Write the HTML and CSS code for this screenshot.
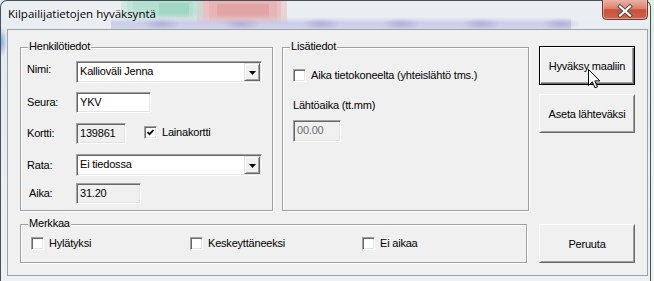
FILE: index.html
```html
<!DOCTYPE html>
<html lang="fi">
<head>
<meta charset="utf-8">
<title>Kilpailijatietojen hyväksyntä</title>
<link rel="stylesheet" href="styles.css">
</head>
<body>
<div class="window">
  <div class="titlebar">
    <span class="title">Kilpailijatietojen hyväksyntä</span>
    <div class="close">
      <svg width="46" height="20" viewBox="0 0 46 20">
        <defs>
          <linearGradient id="cg" x1="0" y1="0" x2="0" y2="1">
            <stop offset="0" stop-color="#eab2a6"/>
            <stop offset="0.45" stop-color="#d9806c"/>
            <stop offset="0.5" stop-color="#c9503a"/>
            <stop offset="1" stop-color="#d3654a"/>
          </linearGradient>
        </defs>
        <path d="M0.5,0 L0.5,15.5 Q0.5,19.5 4.5,19.5 L41.5,19.5 Q45.5,19.5 45.5,15.5 L45.5,0" fill="url(#cg)" stroke="#7a3326" stroke-width="1"/>
        <path d="M1.5,0 L1.5,15.5 Q1.5,18.5 4.5,18.5 L41.5,18.5 Q44.5,18.5 44.5,15.5 L44.5,0" fill="none" stroke="#f3c7bd" stroke-opacity="0.6" stroke-width="1"/>
        <path d="M18,6.5 L28,15.5 M28,6.5 L18,15.5" stroke="#4a4a4a" stroke-width="4" stroke-linecap="square"/>
        <path d="M18,6.5 L28,15.5 M28,6.5 L18,15.5" stroke="#ffffff" stroke-width="2.2" stroke-linecap="square"/>
      </svg>
    </div>
  </div>

  <div class="client">
    <div class="top-row">
      <div class="group g-person">
        <span class="legend">Henkilötiedot</span>
        <div class="form">
          <span class="lbl lbl-h22 lbl-up">Nimi:</span>
          <div class="field combo">
            <span class="combo-text">Kallioväli Jenna</span>
            <span class="drop"><svg width="7" height="4" viewBox="0 0 7 4"><polygon points="0,0 7,0 3.5,4" fill="#000"/></svg></span>
          </div>

          <span class="lbl">Seura:</span>
          <div class="field tb w-seura">YKV</div>

          <span class="lbl">Kortti:</span>
          <div class="kortti-row">
            <div class="field tb ro w-kortti">139861</div>
            <span class="check gap-card">
              <span class="cb"><svg width="7" height="7" viewBox="0 0 7 7"><polyline points="0.5,3 2.5,5.2 6.5,1" fill="none" stroke="#000" stroke-width="1.8"/></svg></span>
              <span class="cb-text">Lainakortti</span>
            </span>
          </div>

          <span class="lbl lbl-h22">Rata:</span>
          <div class="field combo">
            <span class="combo-text">Ei tiedossa</span>
            <span class="drop"><svg width="7" height="4" viewBox="0 0 7 4"><polygon points="0,0 7,0 3.5,4" fill="#000"/></svg></span>
          </div>

          <span class="lbl lbl-aika">Aika:</span>
          <div class="field tb ro w-aika">31.20</div>
        </div>
      </div>

      <div class="group g-extra">
        <span class="legend">Lisätiedot</span>
        <span class="check">
          <span class="cb"></span>
          <span class="cb-text">Aika tietokoneelta (yhteislähtö tms.)</span>
        </span>
        <div class="sublabel">Lähtöaika (tt.mm)</div>
        <div class="field tb ro disabled w-start">00.00</div>
      </div>

      <div class="btn-col">
        <div class="btn default">Hyväksy maaliin</div>
        <div class="btn">Aseta lähteväksi</div>
      </div>
    </div>

    <div class="bottom-row">
      <div class="group g-mark">
        <span class="legend">Merkkaa</span>
        <div class="mark-row">
          <span class="check"><span class="cb"></span><span class="cb-text">Hylätyksi</span></span>
          <span class="check"><span class="cb"></span><span class="cb-text">Keskeyttäneeksi</span></span>
          <span class="check"><span class="cb"></span><span class="cb-text">Ei aikaa</span></span>
        </div>
      </div>
      <div class="btn btn-cancel">Peruuta</div>
    </div>
  </div>

  <svg class="cursor" width="13" height="20" viewBox="0 0 13 20">
    <polygon points="0.5,0.5 0.5,16.5 4.3,12.8 7,18.8 9.4,17.8 6.8,11.9 11.8,11.9" fill="#fff" stroke="#000" stroke-width="1" stroke-linejoin="miter"/>
  </svg>
</div>
</body>
</html>
```

FILE: styles.css
```css
html, body {
  margin: 0;
  padding: 0;
}

body {
  width: 654px;
  height: 281px;
  overflow: hidden;
  background: linear-gradient(to bottom, #dff0e6, #eef4f0);
  font-family: "Liberation Sans", Arial, sans-serif;
  font-size: 11px;
  letter-spacing: -0.2px;
  color: #000;
}

.window {
  position: relative;
  box-sizing: border-box;
  width: 651px;
  height: 281px;
  border: 1px solid #46505a;
  border-bottom: none;
  border-radius: 7px 7px 0 0;
  display: flex;
  flex-direction: column;
  background:
    /* blurred green window behind the glass */
    linear-gradient(to bottom, rgba(120, 195, 165, 0.3) 0, rgba(120, 195, 165, 0.3) 65%, rgba(120, 195, 165, 0) 100%) 158px 2px / 30px 15px no-repeat,
    linear-gradient(to bottom, rgba(150, 215, 190, 0.3) 0, rgba(150, 215, 190, 0.3) 65%, rgba(150, 215, 190, 0) 100%) 132px 0 / 60px 19px no-repeat,
    linear-gradient(to bottom, rgba(150, 215, 190, 0.3) 0, rgba(150, 215, 190, 0.3) 65%, rgba(150, 215, 190, 0) 100%) 126px 0 / 70px 20px no-repeat,
    linear-gradient(to bottom, rgba(150, 215, 190, 0.3) 0, rgba(150, 215, 190, 0.3) 65%, rgba(150, 215, 190, 0) 100%) 120px 0 / 82px 22px no-repeat,
    /* blurred red window */
    linear-gradient(to bottom, rgba(205, 120, 120, 0.28) 0, rgba(205, 120, 120, 0.28) 65%, rgba(205, 120, 120, 0) 100%) 216px 3px / 52px 15px no-repeat,
    linear-gradient(to bottom, rgba(230, 155, 155, 0.32) 0, rgba(230, 155, 155, 0.32) 65%, rgba(230, 155, 155, 0) 100%) 208px 0 / 68px 22px no-repeat,
    linear-gradient(to bottom, rgba(230, 155, 155, 0.32) 0, rgba(230, 155, 155, 0.32) 65%, rgba(230, 155, 155, 0) 100%) 202px 0 / 78px 23px no-repeat,
    linear-gradient(to bottom, rgba(230, 155, 155, 0.32) 0, rgba(230, 155, 155, 0.32) 65%, rgba(230, 155, 155, 0) 100%) 196px 0 / 90px 24px no-repeat,
    /* blurred column headers */
    radial-gradient(closest-side, rgba(140, 140, 195, 0.45), rgba(140, 140, 195, 0)) 140px 17px / 40px 12px no-repeat,
    radial-gradient(closest-side, rgba(140, 140, 195, 0.45), rgba(140, 140, 195, 0)) 220px 17px / 40px 12px no-repeat,
    radial-gradient(closest-side, rgba(140, 140, 195, 0.45), rgba(140, 140, 195, 0)) 300px 17px / 40px 12px no-repeat,
    radial-gradient(closest-side, rgba(140, 140, 195, 0.45), rgba(140, 140, 195, 0)) 380px 17px / 40px 12px no-repeat,
    radial-gradient(closest-side, rgba(140, 140, 195, 0.45), rgba(140, 140, 195, 0)) 460px 17px / 40px 12px no-repeat,
    radial-gradient(closest-side, rgba(140, 140, 195, 0.45), rgba(140, 140, 195, 0)) 540px 17px / 40px 12px no-repeat,
    linear-gradient(to bottom, rgba(200, 202, 232, 0) 0, rgba(200, 202, 232, 0.9) 45%, rgba(200, 202, 232, 0.7) 100%) 110px 16px / 460px 13px no-repeat,
    radial-gradient(closest-side, rgba(80, 140, 215, 0.7), rgba(80, 140, 215, 0)) -6px 26px / 12px 30px no-repeat,
    linear-gradient(to bottom, #eceff2 0, #e9edf1 28px, #e4e9ee 29px, #eef1f3 100%);
}

/* ---------- title bar ---------- */
.titlebar {
  height: 28px;
  display: flex;
  justify-content: space-between;
  align-items: flex-start;
  padding-left: 7px;
}

.title {
  font-family: "Open Sans", "Noto Sans", sans-serif;
  font-size: 11.5px;
  letter-spacing: 0;
  line-height: 16px;
  padding-top: 5px;
  color: #000;
  text-shadow: 0 0 6px rgba(255, 255, 255, 0.9);
}

.close {
  width: 46px;
  height: 20px;
  margin-top: -1px;
  margin-right: 2px;
  line-height: 0;
}

/* ---------- client area ---------- */
.client {
  box-sizing: border-box;
  margin-left: 6px;
  width: 641px;
  height: 247px;
  border: 1px solid #9aa3ab;
  background: #f0f0f0;
  padding: 17px 0 0 12px;
}

.top-row {
  display: flex;
  align-items: flex-start;
}

.bottom-row {
  display: flex;
  align-items: flex-start;
  margin-top: 13px;
}

/* ---------- group boxes ---------- */
.group {
  position: relative;
  box-sizing: border-box;
  border: 1px solid #a0a0a0;
  box-shadow: inset 1px 1px 0 #fff, 1px 1px 0 #fff;
}

.legend {
  position: absolute;
  top: -8px;
  left: 7px;
  padding: 0 1px;
  line-height: 13px;
  background: #f0f0f0;
}

.g-person {
  width: 253px;
  height: 164px;
  padding: 13px 0 0 6px;
}

.g-extra {
  width: 247px;
  height: 164px;
  margin-left: 9px;
  padding: 21px 0 0 10px;
}

.g-mark {
  width: 507px;
  height: 39px;
  padding: 12px 0 0 10px;
}

/* ---------- form grid ---------- */
.form {
  display: grid;
  grid-template-columns: 49px auto;
  grid-template-rows: 31px 31px 31px 29px 21px;
  align-items: start;
  justify-items: start;
}

.lbl {
  line-height: 21px;
  height: 21px;
}

.lbl-h22 {
  line-height: 22px;
  height: 22px;
}

.lbl-up {
  line-height: 17px;
}

.lbl-aika {
  padding-left: 2px;
}

/* ---------- sunken fields ---------- */
.field {
  box-sizing: border-box;
  border: 1px solid;
  border-color: #a0a0a0 #fff #fff #a0a0a0;
  box-shadow: inset 1px 1px 0 #696969, inset -1px -1px 0 #e3e3e3;
  background: #fff;
}

.tb {
  height: 21px;
  padding: 1px 2px 0 3px;
  line-height: 16px;
}

.ro {
  background: #f0f0f0;
}

.disabled {
  color: #6d6d6d;
}

.w-seura { width: 75px; }
.w-kortti { width: 50px; }
.w-aika { width: 65px; }
.w-start { width: 48px; height: 22px; margin-top: 8px; }

.combo {
  width: 186px;
  height: 22px;
  display: flex;
  align-items: stretch;
  padding: 1px;
}

.combo-text {
  flex: 1;
  padding-left: 2px;
  line-height: 17px;
}

.drop {
  box-sizing: border-box;
  width: 16px;
  display: flex;
  align-items: center;
  justify-content: center;
  background: #f0f0f0;
  border: 1px solid;
  border-color: #e3e3e3 #696969 #696969 #e3e3e3;
  box-shadow: inset 1px 1px 0 #fff, inset -1px -1px 0 #a0a0a0;
  padding-top: 1px;
}

.drop svg {
  display: block;
}

/* ---------- check boxes ---------- */
.kortti-row {
  display: flex;
  align-items: center;
  height: 21px;
}

.check {
  display: flex;
  align-items: center;
}

.gap-card {
  margin-left: 18px;
  margin-top: -2px;
}

.cb {
  box-sizing: border-box;
  flex: none;
  width: 13px;
  height: 13px;
  border: 1px solid;
  border-color: #a0a0a0 #fff #fff #a0a0a0;
  box-shadow: inset 1px 1px 0 #696969, inset -1px -1px 0 #e3e3e3;
  background: #fff;
  display: flex;
  align-items: center;
  justify-content: center;
}

.cb svg {
  display: block;
}

.cb-text {
  margin-left: 5px;
  line-height: 13px;
}

.sublabel {
  margin-top: 17px;
  line-height: 13px;
}

.mark-row {
  display: grid;
  grid-template-columns: 159px 172px auto;
}

/* ---------- buttons ---------- */
.btn-col {
  display: flex;
  flex-direction: column;
  gap: 9px;
  margin-left: 10px;
  margin-top: -1px;
}

.btn {
  box-sizing: border-box;
  width: 96px;
  height: 39px;
  display: flex;
  align-items: center;
  justify-content: center;
  background: #f0f0f0;
  border: 1px solid;
  border-color: #fff #696969 #696969 #fff;
  box-shadow: inset 1px 1px 0 #f0f0f0, inset -1px -1px 0 #a0a0a0;
}

.btn.default {
  border-color: #000;
  box-shadow: inset 1px 1px 0 #fff, inset -1px -1px 0 #696969, inset -2px -2px 0 #a0a0a0;
}

.btn-cancel {
  margin-left: 12px;
}

/* ---------- mouse pointer ---------- */
.cursor {
  position: absolute;
  left: 587px;
  top: 68px;
}
```
